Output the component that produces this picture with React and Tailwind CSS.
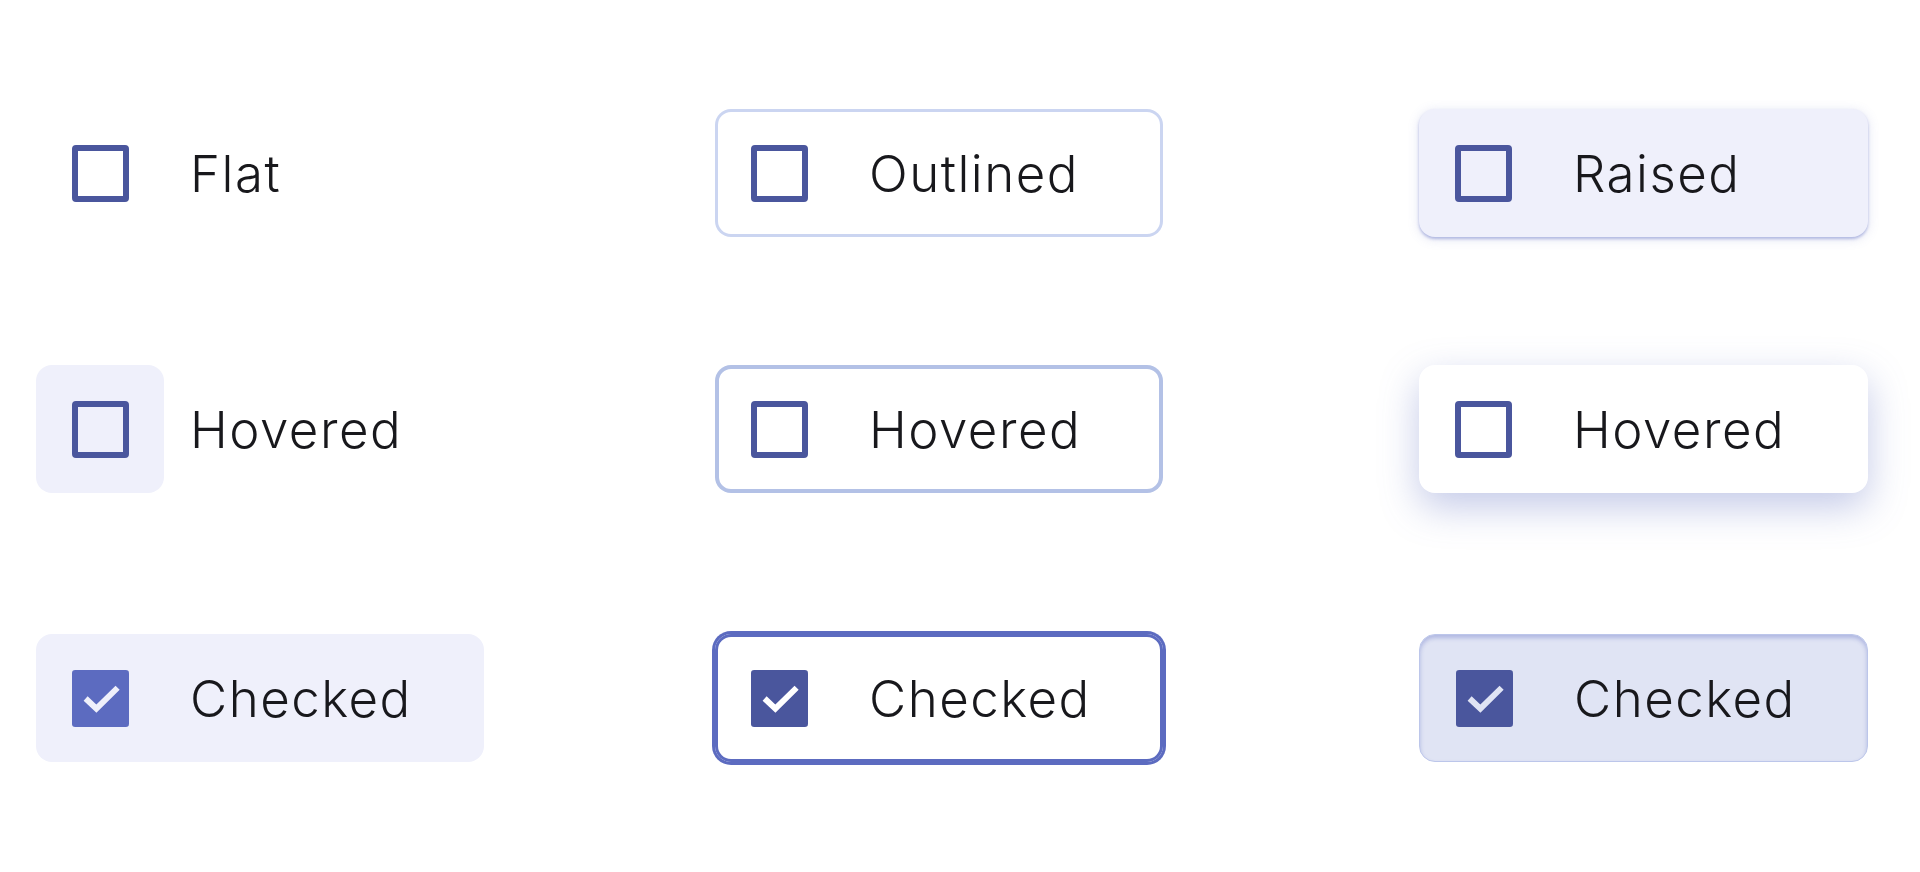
import React from 'react';

// Checkbox glyph: outline when empty, filled square with a knocked-out tick when checked
const Box = ({ checked, fill = '#4a569d', tick = '#ffffff' }) => {
  if (!checked) {
    return <div className="h-[57px] w-[57px] rounded-[4px] border-[6px] border-[#4a569d]" />;
  }
  return (
    <svg viewBox="0 0 18 18" className="h-[57px] w-[57px]">
      <rect x="0" y="0" width="18" height="18" rx="1" fill={fill} />
      <polyline
        points="4.3,9 7.7,12.2 14.4,5.6"
        fill="none"
        stroke={tick}
        strokeWidth="1.85"
        strokeLinecap="butt"
        strokeLinejoin="miter"
      />
    </svg>
  );
};

const Item = ({ label, checked, fill, tick, className = '', boxClass = '' }) => (
  <div className={`flex h-[128px] items-center rounded-2xl ${className}`}>
    <div className={`flex h-[128px] w-[128px] shrink-0 items-center justify-center rounded-2xl ${boxClass}`}>
      <Box checked={checked} fill={fill} tick={tick} />
    </div>
    <span className="ml-[26px] text-[51px] font-[350] leading-none tracking-[1.5px] text-[#18181c]">{label}</span>
  </div>
);

export default function App() {
  return (
    <div className="min-h-screen bg-white pt-[109px] font-['Inter','Noto_Sans',sans-serif]">
      {/* row 1 */}
      <div className="flex pl-[36px]">
        <Item label="Flat" className="w-[448px]" />
        <Item
          label="Outlined"
          className="ml-[231px] w-[448px] bg-white shadow-[inset_0_0_0_3px_#cbd5f1]"
        />
        <Item
          label="Raised"
          className="ml-[256px] w-[449px] bg-[#eff0fb] shadow-[0_2px_3px_rgba(63,81,181,0.35),0_2px_12px_rgba(92,107,192,0.18)]"
        />
      </div>

      {/* row 2 */}
      <div className="mt-[128px] flex pl-[36px]">
        <Item label="Hovered" className="w-[448px]" boxClass="bg-[#eff0fb]" />
        <Item
          label="Hovered"
          className="ml-[231px] w-[448px] bg-white shadow-[inset_0_0_0_4px_#b3c1e6]"
        />
        <Item
          label="Hovered"
          className="ml-[256px] w-[449px] bg-white shadow-[0_14px_38px_rgba(92,107,192,0.36)]"
        />
      </div>

      {/* row 3 */}
      <div className="mt-[141px] flex pl-[36px]">
        <Item label="Checked" checked fill="#5c6bc0" tick="#eff0fb" className="w-[448px] bg-[#eff0fb]" />
        <Item
          label="Checked"
          checked
          tick="#ffffff"
          className="ml-[231px] w-[448px] bg-white shadow-[0_0_0_3px_#5c6bc0,inset_0_0_0_3px_#5c6bc0]"
        />
        <Item
          label="Checked"
          checked
          tick="#e0e4f4"
          className="ml-[256px] w-[449px] border border-[#bcc6ea] bg-[#e0e4f4] shadow-[inset_0_3px_4px_rgba(63,81,181,0.3)]"
        />
      </div>
    </div>
  );
}
